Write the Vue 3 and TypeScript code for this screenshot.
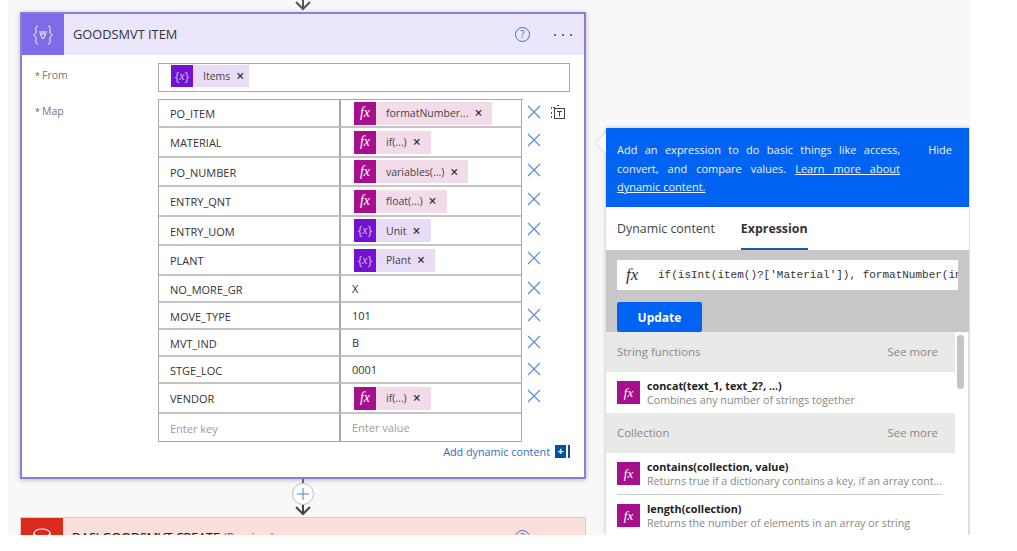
<template>
  <div class="page">
    <div class="flow">
      <svg class="arrow top-arrow" width="20" height="12" viewBox="0 0 20 12">
        <path d="M10 -6V9M3 2l7 7 7-7" fill="none" stroke="#555" stroke-width="2" />
      </svg>

      <section class="card">
        <header class="card-head">
          <div class="head-icon">
            <svg width="26" height="26" viewBox="0 0 26 26" fill="none" stroke="#fff" stroke-width="1">
              <path d="M8 4c-3 0-2 3-2 5 0 3-1 3-2.500 4 1.500 1 2.500 1 2.500 4 0 2-1 5 2 5" />
              <path d="M18 4c3 0 2 3 2 5 0 3 1 3 2.500 4-1.500 1-2.500 1-2.500 4 0 2 1 5-2 5" />
              <path d="M9 10h8M10 12h6l-3 5z" />
            </svg>
          </div>
          <span class="head-title">GOODSMVT ITEM</span>
          <span class="help">?</span>
          <span class="dots">
            <i></i><i></i><i></i>
          </span>
        </header>

        <div class="card-body">
          <div class="field from">
            <label class="field-label"><i>*</i>From</label>
            <div class="from-box">
              <span class="chip var">
                <span class="chip-icon">{<em>x</em>}</span>
                <span class="chip-text">Items</span>
                <span class="chip-x">×</span>
              </span>
            </div>
          </div>

          <div class="field">
            <label class="field-label map-label"><i>*</i>Map</label>
            <div class="map-wrap">
              <div class="map-table">
                <div v-for="row in rows" :key="row.key" class="map-row" :style="{ height: row.h + 'px' }">
                  <div class="cell key-cell">{{ row.key }}</div>
                  <div class="cell val-cell">
                    <span v-if="row.chip" class="chip" :class="row.kind">
                      <span class="chip-icon">
                        <template v-if="row.kind === 'fx'"><em>fx</em></template>
                        <template v-else>{<em>x</em>}</template>
                      </span>
                      <span class="chip-text">{{ row.chip }}</span>
                      <span class="chip-x">×</span>
                    </span>
                    <template v-else>{{ row.value }}</template>
                  </div>
                  <svg class="row-x" width="14" height="14" viewBox="0 0 14 14">
                    <path d="M1 1l12 12M13 1L1 13" stroke="#5a8fd6" stroke-width="1.200" fill="none" />
                  </svg>
                  <svg v-if="row.key === 'PO_ITEM'" class="row-mode" width="16" height="16" viewBox="0 0 16 16" fill="none" stroke="#444">
                    <path d="M5 3.500H1.500V6M1.500 8v2M1.500 12v1.500H3M7 1.500h2" stroke-dasharray="2 1" />
                    <rect x="4.500" y="4.500" width="10" height="10" />
                    <path d="M7 7.500h5M9.500 7.500v5" />
                  </svg>
                </div>
                <div class="map-row last-row">
                  <div class="cell key-cell ph">Enter key</div>
                  <div class="cell val-cell ph">Enter value</div>
                </div>
              </div>
              <div class="add-dynamic">
                <span>Add dynamic content</span>
                <span class="add-icon"><b>+</b></span>
              </div>
            </div>
          </div>
        </div>
      </section>

      <div class="connector">
        <div class="stub"></div>
        <div class="plus">
          <svg width="12" height="12" viewBox="0 0 12 12">
            <path d="M6 0v12M0 6h12" stroke="#4a86cf" stroke-width="1" />
          </svg>
        </div>
        <svg class="arrow" width="20" height="11" viewBox="0 0 20 11">
          <path d="M10 0v9M3 2l7 7 7-7" fill="none" stroke="#444" stroke-width="2" />
        </svg>
      </div>

      <section class="card-red">
        <div class="red-icon">
          <svg width="22" height="22" viewBox="0 0 22 22" fill="none" stroke="#fff" stroke-width="1.200">
            <ellipse cx="11" cy="6" rx="8" ry="4" />
            <path d="M3 6v11c0 2 4 4 8 4s8-2 8-4V6" />
          </svg>
        </div>
        <span class="red-title">DASLGOODSMVT CREATE <small>(Preview)</small></span>
        <span class="help red-help">?</span>
      </section>
    </div>

    <aside class="panel">
      <div class="panel-notch"></div>
      <div class="panel-banner">
        <p>
          Add an expression to do basic things like access, convert, and compare values.
          <u>Learn more about dynamic content.</u>
        </p>
        <span class="hide">Hide</span>
      </div>
      <div class="tabs">
        <span>Dynamic content</span>
        <span class="tab-on">Expression</span>
      </div>
      <div class="expr">
        <div class="expr-input">
          <em class="expr-fx">fx</em>
          <span class="expr-code">if(isInt(item()?['Material']), formatNumber(int(item()?['Material'])</span>
        </div>
        <button class="update">Update</button>
      </div>
      <div class="list-wrap">
        <div class="list">
          <template v-for="group in groups" :key="group.name">
            <div class="group-head">
              <span>{{ group.name }}</span>
              <span class="see-more">See more</span>
            </div>
            <div v-for="fn in group.items" :key="fn.sig" class="fn" :class="{ sep: fn.sep }">
              <span class="fn-icon"><em>fx</em></span>
              <div class="fn-text">
                <div class="fn-sig">{{ fn.sig }}</div>
                <div class="fn-desc">{{ fn.desc }}</div>
              </div>
            </div>
          </template>
        </div>
        <div class="scroll"><div class="thumb"></div></div>
      </div>
    </aside>
  </div>
</template>

<script setup lang="ts">
interface MapRow {
  key: string
  h: number
  chip?: string
  kind?: 'fx' | 'var'
  value?: string
}

const rows: MapRow[] = [
  { key: 'PO_ITEM', h: 28, chip: 'formatNumber...', kind: 'fx' },
  { key: 'MATERIAL', h: 30, chip: 'if(...)', kind: 'fx' },
  { key: 'PO_NUMBER', h: 29, chip: 'variables(...)', kind: 'fx' },
  { key: 'ENTRY_QNT', h: 30, chip: 'float(...)', kind: 'fx' },
  { key: 'ENTRY_UOM', h: 29, chip: 'Unit', kind: 'var' },
  { key: 'PLANT', h: 30, chip: 'Plant', kind: 'var' },
  { key: 'NO_MORE_GR', h: 27, value: 'X' },
  { key: 'MOVE_TYPE', h: 27, value: '101' },
  { key: 'MVT_IND', h: 27, value: 'B' },
  { key: 'STGE_LOC', h: 27, value: '0001' },
  { key: 'VENDOR', h: 30, chip: 'if(...)', kind: 'fx' },
]

const groups = [
  {
    name: 'String functions',
    items: [
      { sig: 'concat(text_1, text_2?, ...)', desc: 'Combines any number of strings together', sep: false },
    ],
  },
  {
    name: 'Collection',
    items: [
      { sig: 'contains(collection, value)', desc: 'Returns true if a dictionary contains a key, if an array cont...', sep: true },
      { sig: 'length(collection)', desc: 'Returns the number of elements in an array or string', sep: false },
    ],
  },
]
</script>

<style>
html,
body {
  margin: 0;
  background: #fff;
}
</style>

<style scoped>
.page {
  width: 962px;
  height: 535px;
  margin-left: 8px;
  background: #f8f8f8;
  display: flex;
  overflow: hidden;
  font-family: 'Open Sans', 'Noto Sans', sans-serif;
  font-size: 11px;
  color: #333;
  box-sizing: border-box;
  padding-left: 12px;
}

.flow {
  width: 566px;
  flex: none;
  display: flex;
  flex-direction: column;
  align-items: center;
}

.top-arrow {
  flex: none;
}

.card {
  width: 100%;
  height: 467px;
  flex: none;
  box-sizing: border-box;
  border: 2px solid #8c7ed6;
  background: #fff;
  box-shadow: 0 1px 5px rgba(0, 0, 0, 0.25);
}

.card-head {
  height: 41px;
  background: #ebe6fb;
  display: flex;
  align-items: center;
}

.head-icon {
  width: 42px;
  height: 41px;
  background: #7f6be8;
  display: flex;
  align-items: center;
  justify-content: center;
}

.head-title {
  margin-left: 9px;
  padding-bottom: 2px;
  font-size: 12.800px;
  color: #333;
  flex: 1;
}

.help {
  width: 13px;
  height: 13px;
  border: 1px solid #3b73c4;
  border-radius: 50%;
  color: #3b73c4;
  font-size: 10px;
  line-height: 13px;
  text-align: center;
}

.dots {
  margin: 0 12px 0 24px;
  display: flex;
  gap: 6px;
}

.dots i {
  width: 2px;
  height: 2px;
  background: #444;
  border-radius: 50%;
}

.card-body {
  padding: 8px 14px 0 13px;
}

.field {
  display: flex;
}

.from {
  margin-bottom: 7px;
}

.field-label {
  width: 123px;
  flex: none;
  color: #777;
  font-size: 10.500px;
  padding-top: 5px;
}

.map-label {
  padding-top: 5px;
}

.field-label i {
  color: #c0392b;
  font-style: normal;
  font-size: 9px;
  margin-right: 2px;
}

.from-box {
  flex: 1;
  height: 29px;
  box-sizing: border-box;
  border: 1px solid #a9a9a9;
  padding: 1px 0 0 12px;
  display: flex;
  align-items: flex-start;
}

.map-wrap {
  flex: 1;
}

.map-table {
  width: 365px;
  border-top: 1px solid #a9a9a9;
  box-sizing: border-box;
}

.map-row {
  display: flex;
  height: 29px;
  position: relative;
  box-sizing: border-box;
}

.last-row {
  height: 28px;
}

.cell {
  box-sizing: border-box;
  border-bottom: 2px solid #c4c4c4;
  display: flex;
  align-items: center;
  font-size: 11px;
  color: #333;
}

.last-row .cell {
  border-bottom: 1px solid #a9a9a9;
}

.key-cell {
  width: 183px;
  padding: 1px 0 0 11px;
  border-left: 1px solid #a9a9a9;
  border-right: 2px solid #a9a9a9;
}

.val-cell {
  width: 181px;
  padding-left: 11px;
  border-right: 1px solid #a9a9a9;
}

.ph {
  color: #9b9b9b;
}

.row-x {
  position: absolute;
  left: 369px;
  top: 5px;
}

.row-mode {
  position: absolute;
  left: 392px;
  top: 4px;
}

.chip {
  display: inline-flex;
  align-items: center;
  height: 23px;
  padding-right: 10px;
  margin-left: 2px;
  font-size: 10.500px;
  color: #444;
}

.chip.fx {
  background: #f3dcea;
}

.chip.var {
  background: #e8dcf6;
}

.chip-icon {
  width: 22px;
  height: 23px;
  display: flex;
  align-items: center;
  justify-content: center;
  color: #d9b8f2;
  font-size: 12px;
}

.chip-icon em {
  font-family: 'Liberation Serif', serif;
  font-style: italic;
}

.fx .chip-icon {
  background: #a80f8c;
  color: #fff;
  font-size: 14px;
}

.var .chip-icon {
  background: #7312d0;
}

.from-box .chip {
  margin-left: 0;
  height: 22px;
  padding-right: 5px;
}

.from-box .chip-icon {
  height: 22px;
}

.chip-text {
  margin-left: 10px;
}

.chip-x {
  margin-left: 6px;
  font-size: 14px;
  font-weight: 600;
  line-height: 1;
  color: #333;
}

.add-dynamic {
  width: 410px;
  margin-top: 2px;
  display: flex;
  justify-content: flex-end;
  align-items: center;
  color: #2e6db8;
  font-size: 10.800px;
}

.add-icon {
  width: 13px;
  height: 13px;
  margin-left: 5px;
  background: #0b4f9e;
  border-right: 2px solid #fff;
  box-shadow: 2px 0 0 #0b4f9e;
  box-sizing: border-box;
  color: #fff;
  font-size: 10px;
  line-height: 13px;
  text-align: center;
}

.connector {
  width: 24px;
  height: 38px;
  flex: none;
  display: flex;
  flex-direction: column;
  align-items: center;
}

.stub {
  width: 2px;
  height: 4px;
  background: #666;
  flex: none;
}

.plus {
  width: 22px;
  height: 22px;
  flex: none;
  box-sizing: border-box;
  border: 1px solid #bbb;
  border-radius: 50%;
  background: #fff;
  display: flex;
  align-items: center;
  justify-content: center;
}

.card-red {
  width: 100%;
  height: 40px;
  flex: none;
  box-sizing: border-box;
  border: 1px solid #e6c9c5;
  background: #fbdfda;
  display: flex;
  align-items: flex-start;
}

.red-icon {
  width: 42px;
  height: 40px;
  background: #db2a1e;
  display: flex;
  align-items: center;
  justify-content: center;
}

.red-title {
  margin: 11px 0 0 9px;
  font-size: 12.500px;
  color: #222;
  flex: 1;
  -webkit-text-stroke: 0.2px #222;
}

.red-title small {
  font-size: 12px;
  color: #666;
  -webkit-text-stroke: 0;
}

.red-help {
  margin: 12px 55px 0 0;
}

.panel {
  width: 363px;
  flex: none;
  margin: 128px 0 0 20px;
  position: relative;
  background: #fff;
  box-shadow: 0 0 4px rgba(0, 0, 0, 0.25);
  display: flex;
  flex-direction: column;
}

.panel-notch {
  position: absolute;
  left: -7px;
  top: 8px;
  width: 14px;
  height: 14px;
  background: #fff;
  box-shadow: 0 0 3px rgba(0, 0, 0, 0.2);
  transform: rotate(45deg);
}

.panel-banner {
  height: 79px;
  box-sizing: border-box;
  background: #0063f2;
  position: relative;
  padding: 13px 17px 0 11px;
  color: #eef4ff;
  display: flex;
  justify-content: space-between;
}

.panel-banner p {
  margin: 0;
  width: 283px;
  font-size: 11px;
  line-height: 18.500px;
  text-align: justify;
}

.hide {
  font-size: 11px;
  line-height: 18.500px;
}

.tabs {
  height: 43px;
  flex: none;
  box-sizing: border-box;
  padding-left: 11px;
  display: flex;
  align-items: center;
  gap: 26px;
  font-size: 12.400px;
  color: #444;
}

.tab-on {
  height: 43px;
  line-height: 43px;
  box-sizing: border-box;
  border-bottom: 2px solid #1f5fa8;
  font-weight: 700;
  color: #333;
}

.expr {
  height: 82px;
  flex: none;
  box-sizing: border-box;
  background: #c8c8c8;
  padding: 10px 11px 0;
}

.expr-input {
  height: 30px;
  background: #fff;
  display: flex;
  align-items: center;
  overflow: hidden;
  white-space: nowrap;
}

.expr-fx {
  margin-left: 9px;
  width: 32px;
  flex: none;
  font-family: 'Liberation Serif', serif;
  font-size: 17px;
  color: #333;
}

.expr-code {
  font-family: 'Liberation Mono', monospace;
  font-size: 11px;
  color: #333;
}

.update {
  display: block;
  margin-top: 12px;
  width: 85px;
  height: 30px;
  border: 0;
  border-radius: 2px;
  background: #0063f2;
  color: #fff;
  font-family: inherit;
  font-size: 12px;
  font-weight: 700;
}

.list-wrap {
  flex: 1;
  display: flex;
  min-height: 0;
}

.list {
  flex: 1;
  min-width: 0;
  overflow: hidden;
}

.group-head {
  height: 40px;
  background: #e9e9e7;
  box-sizing: border-box;
  padding: 0 17px 2px 11px;
  display: flex;
  align-items: center;
  justify-content: space-between;
  color: #888;
  font-size: 11.400px;
}

.fn {
  height: 41px;
  margin: 0 12px 0 11px;
  display: flex;
  align-items: center;
  box-sizing: border-box;
}

.fn.sep {
  border-bottom: 1px solid #ccc;
  height: 42px;
}

.fn-icon {
  width: 23px;
  height: 23px;
  flex: none;
  background: #a80f8c;
  color: #fff;
  display: flex;
  align-items: center;
  justify-content: center;
  font-family: 'Liberation Serif', serif;
  font-size: 13px;
}

.fn-text {
  margin-left: 7px;
  min-width: 0;
}

.fn-sig {
  font-size: 10.800px;
  font-weight: 700;
  color: #222;
  line-height: 15px;
}

.fn-desc {
  font-size: 10.700px;
  line-height: 15px;
  color: #888;
  white-space: nowrap;
}

.scroll {
  width: 14px;
  flex: none;
  background: #fff;
  border-right: 1px solid #ddd;
  box-sizing: border-box;
}

.thumb {
  width: 7px;
  height: 54px;
  margin: 3px 0 0 2px;
  border-radius: 4px;
  background: #c4c4c4;
}
</style>
